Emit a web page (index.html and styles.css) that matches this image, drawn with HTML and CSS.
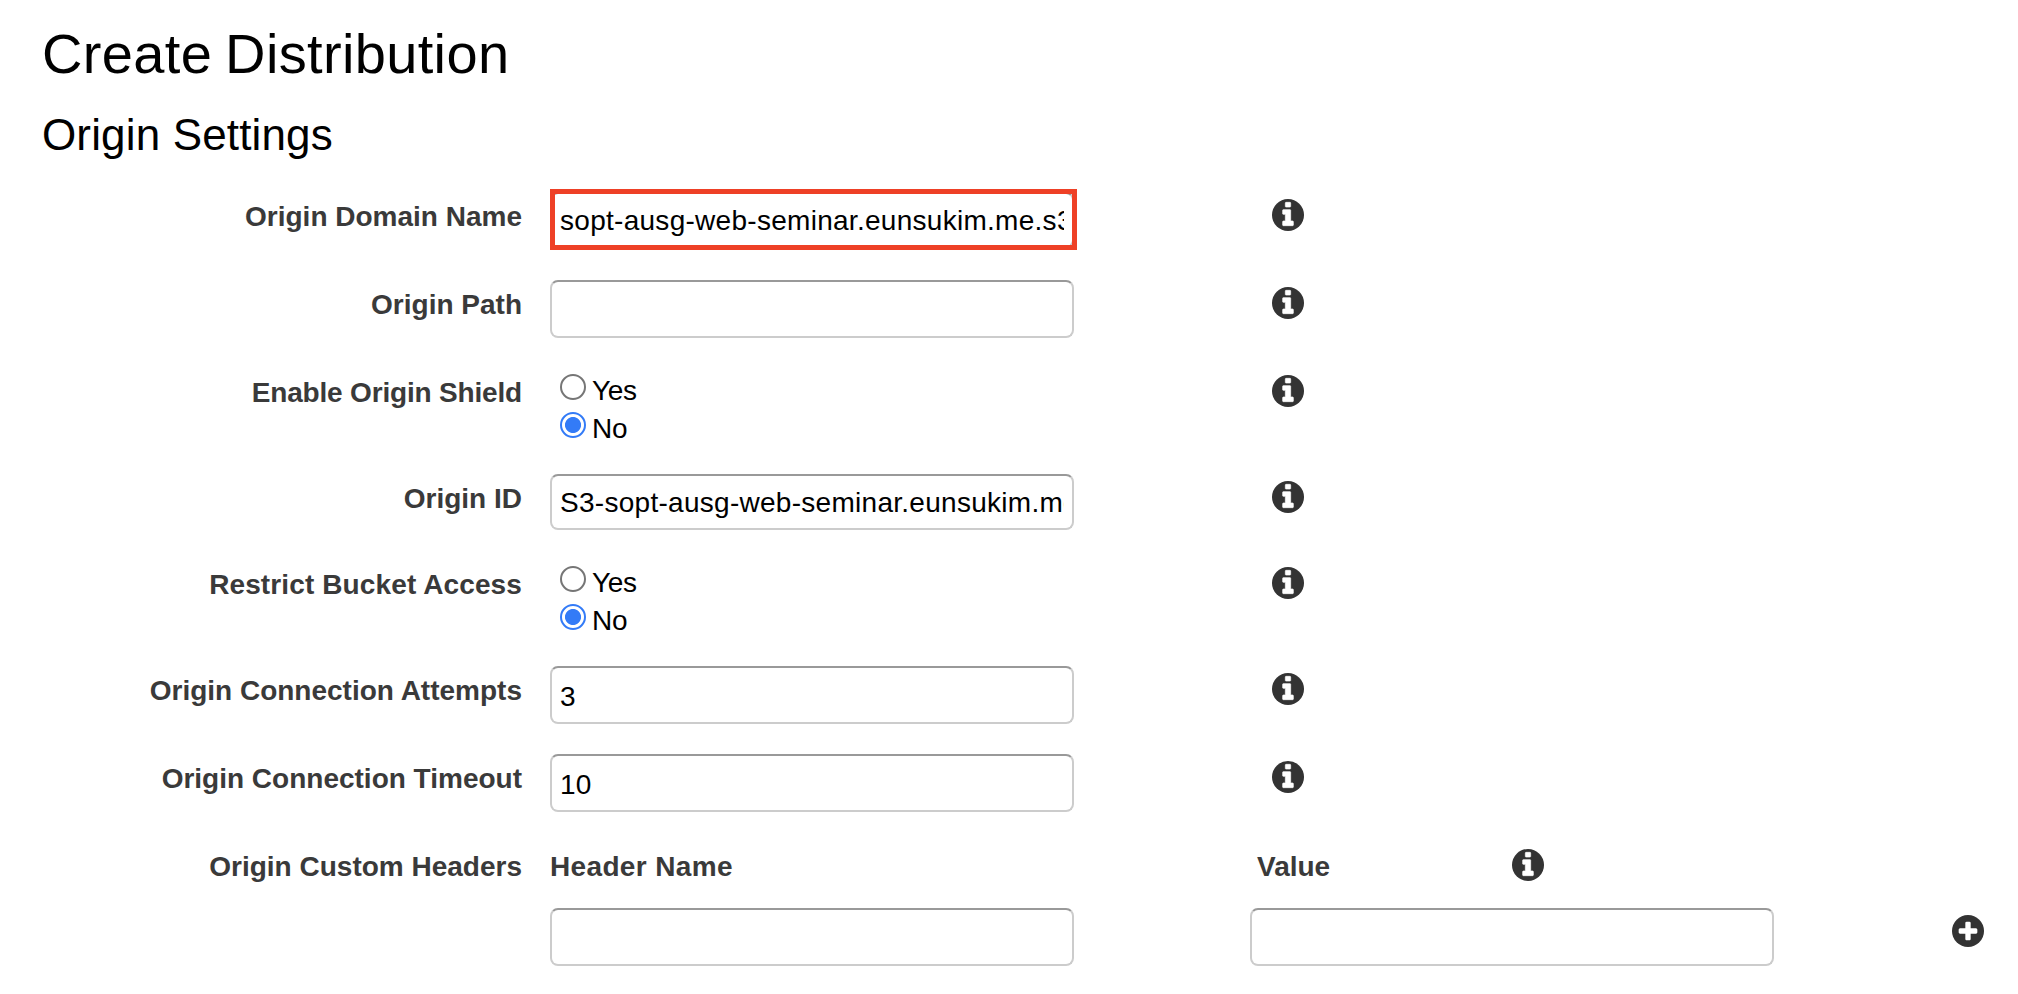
FILE: index.html
```html
<!DOCTYPE html>
<html lang="en">
<head>
<meta charset="utf-8">
<title>Create Distribution</title>
<link rel="stylesheet" href="styles.css">
</head>
<body>
<svg class="sprite" aria-hidden="true">
  <symbol id="info" viewBox="0 0 1536 1536">
    <circle cx="768" cy="768" r="768" fill="#333"/>
    <path fill="#fff" stroke="#fff" stroke-width="32" d="M1024 1248v-160q0-14-9-23t-23-9h-96v-512q0-14-9-23t-23-9h-320q-14 0-23 9t-9 23v160q0 14 9 23t23 9h96v320h-96q-14 0-23 9t-9 23v160q0 14 9 23t23 9h448q14 0 23-9t9-23zm-128-896v-160q0-14-9-23t-23-9h-192q-14 0-23 9t-9 23v160q0 14 9 23t23 9h192q14 0 23-9t9-23z"/>
  </symbol>
  <symbol id="plus" viewBox="0 0 1536 1536">
    <circle cx="768" cy="768" r="768" fill="#333"/>
    <path fill="#fff" d="M1216 832v-128q0-26-19-45t-45-19h-256v-256q0-26-19-45t-45-19h-128q-26 0-45 19t-19 45v256h-256q-26 0-45 19t-19 45v128q0 26 19 45t45 19h256v256q0 26 19 45t45 19h128q26 0 45-19t19-45v-256h256q26 0 45-19t19-45z"/>
  </symbol>
</svg>
<main class="page">
  <h1 class="title">Create Distribution</h1>
  <h2 class="subtitle">Origin Settings</h2>
  <form class="form">
    <div class="row">
      <label class="label" for="domain">Origin Domain Name</label>
      <div class="field highlighted"><input class="input compact" id="domain" value="sopt-ausg-web-seminar.eunsukim.me.s3.amazonaws.com"></div>
      <svg class="icon"><use href="#info"/></svg>
    </div>
    <div class="row">
      <label class="label" for="path">Origin Path</label>
      <div class="field"><input class="input" id="path"></div>
      <svg class="icon"><use href="#info"/></svg>
    </div>
    <div class="row row-radio">
      <span class="label tight">Enable Origin Shield</span>
      <div class="field radios">
        <label class="option"><input type="radio" name="shield" class="radio">Yes</label>
        <label class="option"><input type="radio" name="shield" class="radio" checked>No</label>
      </div>
      <svg class="icon"><use href="#info"/></svg>
    </div>
    <div class="row row-compact">
      <label class="label" for="oid">Origin ID</label>
      <div class="field"><input class="input compact" id="oid" value="S3-sopt-ausg-web-seminar.eunsukim.me"></div>
      <svg class="icon"><use href="#info"/></svg>
    </div>
    <div class="row row-radio">
      <span class="label loose">Restrict Bucket Access</span>
      <div class="field radios">
        <label class="option"><input type="radio" name="bucket" class="radio">Yes</label>
        <label class="option"><input type="radio" name="bucket" class="radio" checked>No</label>
      </div>
      <svg class="icon"><use href="#info"/></svg>
    </div>
    <div class="row">
      <label class="label" for="attempts">Origin Connection Attempts</label>
      <div class="field"><input class="input" id="attempts" value="3"></div>
      <svg class="icon"><use href="#info"/></svg>
    </div>
    <div class="row">
      <label class="label" for="timeout">Origin Connection Timeout</label>
      <div class="field"><input class="input" id="timeout" value="10"></div>
      <svg class="icon"><use href="#info"/></svg>
    </div>
    <div class="row row-head">
      <span class="label">Origin Custom Headers</span>
      <span class="column-name header-name">Header Name</span>
      <div class="value-head"><span class="column-name">Value</span><svg class="icon"><use href="#info"/></svg></div>
    </div>
    <div class="row row-pair">
      <span></span>
      <div class="field"><input class="input" aria-label="Header Name"></div>
      <div class="field"><input class="input" aria-label="Value"></div>
      <svg class="icon"><use href="#plus"/></svg>
    </div>
  </form>
</main>
</body>
</html>
```
FILE: styles.css
```css
*,
*::after { box-sizing: border-box; }

body {
  margin: 0;
  background: #fff;
  color: #000;
  font: 28px/32px "Liberation Sans", Arial, sans-serif;
}

.sprite { display: none; }

.page { padding-top: 22px; }

.title,
.subtitle {
  margin: 0;
  padding-left: 42px;
  font-weight: 400;
}

.title {
  font-size: 56px;
  line-height: 64px;
  letter-spacing: 0.35px;
  word-spacing: -3px;
}

.subtitle {
  margin-top: 24px;
  font-size: 44px;
  line-height: 50px;
  letter-spacing: 0.15px;
}

.form { padding-top: 32px; }

.row {
  display: grid;
  grid-template-columns: 522px 694px 32px;
  column-gap: 28px;
  height: 88px;
  align-items: start;
}

.row-radio { height: 106px; }
.row-compact { height: 86px; }
.row-head { height: 66px; grid-template-columns: 522px 679px 300px; }
.row-pair { grid-template-columns: 522px 672px 674px 32px; }

.label,
.column-name {
  padding-top: 9px;
  color: #3a3a3a;
  font-weight: 700;
}

.label { text-align: right; }
.label.tight { letter-spacing: -0.18px; }
.label.loose { letter-spacing: 0.12px; }
.header-name { letter-spacing: 0.35px; }

.field { width: 524px; }

.input {
  display: block;
  width: 524px;
  height: 58px;
  padding: 4px 8px 0;
  border: 2px solid #ccc;
  border-top-color: #999;
  border-radius: 8px;
  background: #fff;
  color: #000;
  font: inherit;
  letter-spacing: 0.28px;
  outline: none;
}

.input.compact {
  height: 56px;
  padding-top: 2px;
}

/* Marker frame drawn over the domain field */
.highlighted { position: relative; }

.highlighted::after {
  content: "";
  position: absolute;
  top: -3px;
  left: 0;
  width: 527px;
  height: 61px;
  border: 5px solid #ee4026;
}

.icon {
  display: block;
  width: 32px;
  height: 32px;
  margin-top: 6.5px;
}

.radios {
  display: flex;
  flex-direction: column;
  padding: 6px 0 0 10px;
}

.option {
  display: flex;
  gap: 6px;
  height: 38px;
  line-height: 34px;
  letter-spacing: -0.3px;
}

.radio {
  appearance: none;
  width: 26px;
  height: 26px;
  margin: 0;
  border: 2px solid #767676;
  border-radius: 50%;
  background: #fff;
}

.radio:checked {
  border-color: #337bf7;
  background: radial-gradient(circle, #337bf7 7.6px, #fff 8.4px);
}

.value-head {
  display: flex;
  justify-content: space-between;
  width: 287px;
}
```
